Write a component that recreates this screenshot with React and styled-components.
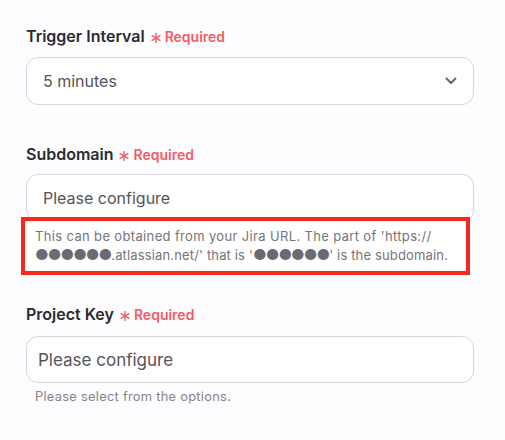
import styled, { createGlobalStyle } from "styled-components";

const GlobalStyle = createGlobalStyle`
  body {
    margin: 0;
    background: #fdfcfe;
    font-family: Inter, "Noto Sans", sans-serif;
  }
`;

const Form = styled.div`
  width: 448px;
  padding: 26px 0 0 26px;
  display: flex;
  flex-direction: column;
`;

const Field = styled.section`
  display: flex;
  flex-direction: column;
  margin-bottom: ${(p) => p.$gap || 0}px;
`;

const Label = styled.div`
  display: flex;
  align-items: center;
  height: 20px;
  margin-bottom: ${(p) => p.$space || 11}px;
  font-size: 16px;
  font-weight: 600;
  color: #2b2b30;
`;

const Required = styled.span`
  display: inline-flex;
  align-items: center;
  margin-left: 6px;
  font-size: 14px;
  font-weight: 600;
  color: #f25c64;

  svg {
    margin-right: 4px;
    margin-top: 3px;
  }
`;

const Box = styled.div`
  box-sizing: border-box;
  height: ${(p) => p.$h || 48}px;
  border: 1px solid #d6d5df;
  border-radius: 12px;
  background: #fff;
  display: flex;
  align-items: center;
  justify-content: space-between;
  padding: 0 16px 0 ${(p) => p.$pad || 16}px;
  font-size: ${(p) => p.$size || 16}px;
  color: #555459;
`;

const Highlight = styled.div`
  position: relative;
  margin: -5px 0 0 -5px;
  width: 449px;
  box-sizing: border-box;
  border: 4px solid #f4291b;
  background: #fff;
  padding: 6px 4px 6px 10px;
  font-size: 13px;
  line-height: 19px;
  white-space: nowrap;
  color: #75747b;
`;

const Line = styled.div`
  letter-spacing: ${(p) => p.$spacing}px;
`;

const Dots = styled.span`
  font-size: 15px;
  line-height: 1;
  color: #6b6a72;
  letter-spacing: -1px;
`;

const Hint = styled.div`
  margin: 6px 0 0 9px;
  font-size: 12.8px;
  line-height: 16px;
  letter-spacing: 0.3px;
  color: #85848b;
`;

const Asterisk = () => (
  <svg width="10" height="10" viewBox="0 0 10 10" stroke="#f25c64" strokeWidth="1.4" strokeLinecap="round">
    <line x1="5" y1="0.5" x2="5" y2="9.5" />
    <line x1="1.1" y1="2.7" x2="8.9" y2="7.3" />
    <line x1="1.1" y1="7.3" x2="8.9" y2="2.7" />
  </svg>
);

const Chevron = () => (
  <svg width="12" height="8" viewBox="0 0 12 8" fill="none" stroke="#66656b" strokeWidth="2" strokeLinecap="round" strokeLinejoin="round">
    <polyline points="1.5,1.5 6,6 10.5,1.5" />
  </svg>
);

const FieldLabel = ({ children, space }) => (
  <Label $space={space}>
    {children}
    <Required>
      <Asterisk />
      Required
    </Required>
  </Label>
);

export default function App() {
  return (
    <>
      <GlobalStyle />
      <Form>
        <Field $gap={39}>
          <FieldLabel>Trigger Interval</FieldLabel>
          <Box>
            5 minutes
            <Chevron />
          </Box>
        </Field>
        <Field $gap={29}>
          <FieldLabel space={10}>Subdomain</FieldLabel>
          <Box>Please configure</Box>
          <Highlight>
            <Line $spacing={0.35}>
              This can be obtained from your Jira URL. The part of 'https://
            </Line>
            <Line $spacing={0.15}>
              <Dots>●●●●●●</Dots>.atlassian.net/' that is '<Dots>●●●●●●</Dots>' is the subdomain.
            </Line>
          </Highlight>
        </Field>
        <Field>
          <FieldLabel space={12}>Project Key</FieldLabel>
          <Box $h={47} $pad={11} $size={17}>Please configure</Box>
          <Hint>Please select from the options.</Hint>
        </Field>
      </Form>
    </>
  );
}
